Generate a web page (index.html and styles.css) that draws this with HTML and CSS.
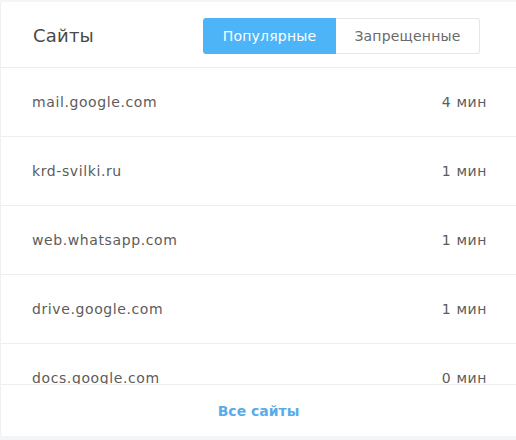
FILE: index.html
```html
<!DOCTYPE html>
<html lang="ru">
<head>
<meta charset="utf-8">
<title>Сайты</title>
<link rel="stylesheet" href="styles.css">
</head>
<body>
<div class="card">
  <div class="header">
    <div class="title">Сайты</div>
    <div class="toggle">
      <div class="tab active">Популярные</div>
      <div class="tab">Запрещенные</div>
    </div>
  </div>
  <div class="list">
    <div class="row"><span class="site">mail.google.com</span><span class="time">4 мин</span></div>
    <div class="row"><span class="site">krd-svilki.ru</span><span class="time">1 мин</span></div>
    <div class="row"><span class="site">web.whatsapp.com</span><span class="time">1 мин</span></div>
    <div class="row"><span class="site">drive.google.com</span><span class="time">1 мин</span></div>
    <div class="row"><span class="site">docs.google.com</span><span class="time">0 мин</span></div>
  </div>
  <div class="footer"><span class="all">Все сайты</span></div>
</div>
</body>
</html>
```
FILE: styles.css
```css
* { box-sizing: border-box; }
html, body { margin: 0; padding: 0; }
body {
  background: #f4f5f7;
  font-family: "DejaVu Sans", "Noto Sans", sans-serif;
  color: #555;
  padding-top: 2px;
}
.card {
  background: #fff;
  height: 434px;
  border-left: 1px solid #eef0f2;
  border-radius: 3px 0 0 3px;
  display: flex;
  flex-direction: column;
}
.header {
  height: 66px;
  flex: none;
  display: flex;
  align-items: center;
  justify-content: space-between;
  padding: 0 36px 0 32px;
  border-bottom: 1px solid #ececec;
}
.title {
  font-size: 18px;
  color: #4a4a4a;
  padding-top: 2px;
  letter-spacing: 0.2px;
}
.toggle {
  display: flex;
  height: 36px;
  margin-top: 3px;
}
.tab {
  display: flex;
  align-items: center;
  justify-content: center;
  font-size: 14px;
  color: #6a6a6a;
  width: 144px;
  border: 1px solid #e6e6e6;
  border-left: none;
  border-radius: 0 3px 3px 0;
  background: #fff;
  letter-spacing: 0.2px;
}
.tab.active {
  width: 133px;
  background: #4db4f8;
  color: #fff;
  border: none;
  border-radius: 3px 0 0 3px;
}
.list {
  height: 316px;
  flex: none;
  overflow: hidden;
}
.row {
  height: 69px;
  display: flex;
  align-items: center;
  justify-content: space-between;
  padding: 0 29px 0 31px;
  border-bottom: 1px solid #eeeeee;
  font-size: 14px;
  color: #5c5c5c;
  letter-spacing: 0.6px;
}
.footer {
  flex: 1;
  display: flex;
  align-items: center;
  justify-content: center;
  border-top: 1px solid #eeeeee;
}
.all {
  font-size: 14px;
  font-weight: bold;
  color: #5aace8;
}
```
